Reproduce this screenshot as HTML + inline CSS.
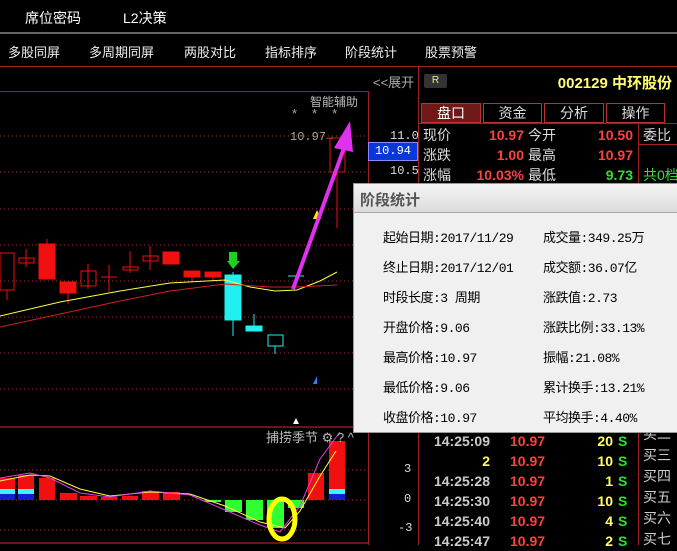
<!DOCTYPE html>
<html><head><meta charset="utf-8"><style>
*{margin:0;padding:0;box-sizing:border-box}
body{width:677px;height:545px;background:#000;overflow:hidden;position:relative;font-family:"Liberation Sans","Noto Sans CJK SC",sans-serif;color:#ddd}
.a{position:absolute;white-space:nowrap}
.m{font-family:"Liberation Mono","Noto Sans CJK SC",monospace}
.t{font-size:14px;color:#fff}
.r{color:#ff4040}.y{color:#ffff60}.g{color:#30e030}.w{color:#e0e0e0}
.pop{position:absolute;left:353px;top:183px;width:330px;height:250px;background:#f0f0f0;border:1px solid #999}
.pt{height:29px;background:linear-gradient(#f4f4f4,#dcdcdc);border-bottom:1px solid #aaa;font-size:15px;font-weight:bold;color:#555;padding:5px 0 0 6px}
.pl{position:absolute;font-size:13px;color:#000;font-family:"Liberation Mono","Noto Sans CJK SC",monospace;letter-spacing:-0.5px}
</style></head><body>
<div class="a t" style="left:25px;top:8px">席位密码</div>
<div class="a t" style="left:123px;top:8px">L2决策</div>
<div class="a" style="left:0;top:32px;width:677px;height:2px;background:#666"></div>
<div class="a" style="left:8px;top:42px;font-size:13px;color:#eee">多股同屏</div>
<div class="a" style="left:89px;top:42px;font-size:13px;color:#eee">多周期同屏</div>
<div class="a" style="left:184px;top:42px;font-size:13px;color:#eee">两股对比</div>
<div class="a" style="left:265px;top:42px;font-size:13px;color:#eee">指标排序</div>
<div class="a" style="left:345px;top:42px;font-size:13px;color:#eee">阶段统计</div>
<div class="a" style="left:425px;top:42px;font-size:13px;color:#eee">股票预警</div>
<div class="a" style="left:0;top:66px;width:677px;height:1px;background:#a02020"></div>
<div class="a" style="left:0;top:91px;width:368px;height:1px;background:#a02020"></div>
<div class="a" style="left:418px;top:67px;width:1px;height:478px;background:#a02020"></div>
<div class="a" style="left:368px;top:91px;width:1px;height:454px;background:#a02020"></div>
<div class="a" style="left:373px;top:72px;font-size:13px;color:#aaa">&lt;&lt;展开</div>
<div class="a" style="left:424px;top:74px;width:23px;height:14px;background:#333;border-radius:2px;color:#ee6;font-size:10px;text-align:center;line-height:14px">R</div>
<div class="a" style="right:5px;top:72px;font-size:15px;font-weight:bold;color:#ffff70">002129 中环股份</div>
<div class="a" style="left:310px;top:93px;font-size:12px;color:#bbb">智能辅助</div>
<div class="a" style="left:292px;top:106px;font-size:13px;color:#aaa;letter-spacing:15px">***</div>
<div class="a m" style="left:290px;top:130px;font-size:12px;color:#aaa">10.97→</div>
<svg class="a" style="left:0;top:91px" width="368" height="454">
<g stroke="#a03030" stroke-dasharray="1,3">
<line x1="0" y1="45" x2="368" y2="45"/><line x1="0" y1="81" x2="368" y2="81"/><line x1="0" y1="118" x2="368" y2="118"/><line x1="0" y1="154" x2="368" y2="154"/><line x1="0" y1="190" x2="368" y2="190"/><line x1="0" y1="226" x2="368" y2="226"/><line x1="0" y1="262" x2="368" y2="262"/><line x1="0" y1="298" x2="368" y2="298"/>
<line x1="0" y1="379" x2="368" y2="379"/><line x1="0" y1="409" x2="368" y2="409"/><line x1="0" y1="439" x2="368" y2="439"/></g>
<line x1="0" y1="336" x2="368" y2="336" stroke="#c03030"/>
<line x1="0" y1="452" x2="368" y2="452" stroke="#c03030"/>
<g stroke="#f01010" fill="none">
<rect x="0" y="162" width="14" height="37"/><line x1="7" y1="199" x2="7" y2="209"/>
<rect x="19" y="167" width="15" height="5"/><line x1="26" y1="158" x2="26" y2="176"/>
<rect x="81" y="180" width="15" height="15"/><line x1="88" y1="173" x2="88" y2="198"/>
<line x1="101" y1="186" x2="117" y2="186"/><line x1="109" y1="174" x2="109" y2="201"/>
<rect x="123" y="176" width="15" height="3"/><line x1="130" y1="160" x2="130" y2="182"/>
<rect x="143" y="165" width="15" height="5"/><line x1="150" y1="155" x2="150" y2="179"/>
<rect x="330" y="47" width="15" height="34"/><line x1="337" y1="81" x2="337" y2="137"/>
</g>
<g fill="#f01010" stroke="#f01010">
<rect x="39" y="153" width="16" height="35"/><line x1="47" y1="148" x2="47" y2="153"/>
<rect x="60" y="191" width="16" height="11"/><line x1="68" y1="202" x2="68" y2="213"/>
<rect x="163" y="161" width="16" height="12"/>
<rect x="184" y="180" width="16" height="6"/><line x1="192" y1="186" x2="192" y2="191"/>
<rect x="205" y="181" width="16" height="5"/><line x1="213" y1="186" x2="213" y2="190"/>
</g>
<g fill="#20f0f0" stroke="#20f0f0">
<rect x="225" y="184" width="16" height="45"/><line x1="233" y1="181" x2="233" y2="245"/>
<rect x="246" y="235" width="16" height="5"/><line x1="254" y1="223" x2="254" y2="240"/>
<rect x="268" y="244" width="15" height="11" fill="none"/><line x1="275" y1="255" x2="275" y2="263"/>
<line x1="288" y1="185" x2="304" y2="185"/>
</g>
<path d="M227 170 L240 170 L233 178Z" fill="#20d020"/><rect x="229" y="161" width="8" height="9" fill="#20d020"/>
<polyline fill="none" stroke="#ffff40" points="0,225 60,211 120,200 170,192 225,189 250,196 275,200 297,199 320,190 337,181"/>
<polyline fill="none" stroke="#d02020" points="0,236 60,223 120,210 170,200 225,193 270,196 297,196 337,194"/>
<path d="M313 128 L317 119 L321 128 Z" fill="#ffee00"/>
<line x1="293" y1="198" x2="344" y2="57" stroke="#e030f0" stroke-width="4"/>
<path d="M334 57 L350 30 L353 61 Z" fill="#e030f0"/>
<path d="M313 293 L317 285 L317 293Z" fill="#3080ff"/>
<path d="M293 333 L296 327 L299 333Z" fill="#fff"/>
<g fill="#f01010">
<rect x="0" y="387" width="15" height="22"/><rect x="18" y="384" width="16" height="25"/><rect x="39" y="387" width="16" height="22"/>
<rect x="60" y="402" width="17" height="7"/><rect x="80" y="405" width="17" height="4"/><rect x="101" y="406" width="16" height="3"/><rect x="122" y="405" width="16" height="4"/><rect x="142" y="400" width="17" height="9"/><rect x="163" y="401" width="17" height="8"/>
<rect x="308" y="382" width="16" height="27"/><rect x="329" y="350" width="16" height="59"/></g>
<g fill="#30ff30"><rect x="205" y="409" width="16" height="2"/><rect x="225" y="409" width="17" height="12"/><rect x="246" y="409" width="17" height="20"/><rect x="267" y="409" width="17" height="28"/><rect x="288" y="409" width="16" height="8"/></g>
<g fill="#40f0ff"><rect x="0" y="398" width="15" height="5"/><rect x="18" y="398" width="16" height="5"/><rect x="329" y="398" width="16" height="5"/></g>
<g fill="#1020d0"><rect x="0" y="403" width="15" height="6"/><rect x="18" y="403" width="16" height="6"/><rect x="329" y="403" width="16" height="6"/></g>
<polyline fill="none" stroke="#ffff40" points="0,390 30,384 50,385 80,398 110,405 150,401 190,403 225,415 260,431 285,437 300,420 320,385 336,360"/>
<polyline fill="none" stroke="#e040e0" points="0,387 30,382 50,387 80,402 110,406 150,400 190,404 225,419 260,434 280,441 300,415 320,368 340,341"/>
<ellipse cx="282" cy="428" rx="13" ry="20" fill="none" stroke="#ffff00" stroke-width="5"/>
</svg>
<div class="a" style="left:266px;top:427px;font-size:13px;color:#bbb">捕捞季节 ⚙ ? ^</div>
<div class="a m" style="left:390px;top:129px;font-size:12px;color:#ddd">11.0</div>
<div class="a m" style="left:368px;top:142px;width:50px;height:19px;background:#0838d8;border:1px solid #88f;color:#fff;font-size:12px;text-align:center;line-height:17px">10.94</div>
<div class="a m" style="left:390px;top:164px;font-size:12px;color:#ddd">10.5</div>
<div class="a m" style="left:404px;top:462px;font-size:12px;color:#ddd">3</div>
<div class="a m" style="left:404px;top:492px;font-size:12px;color:#ddd">0</div>
<div class="a m" style="left:398px;top:521px;font-size:12px;color:#ddd">-3</div>
<div class="a" style="left:421px;top:103px;width:60px;height:20px;background:#701818;border:1px solid #c03030;color:#fff;font-size:14px;text-align:center;line-height:18px">盘口</div>
<div class="a" style="left:483px;top:103px;width:59px;height:20px;border:1px solid #c03030;color:#ddd;font-size:14px;text-align:center;line-height:18px">资金</div>
<div class="a" style="left:544px;top:103px;width:60px;height:20px;border:1px solid #c03030;color:#ddd;font-size:14px;text-align:center;line-height:18px">分析</div>
<div class="a" style="left:606px;top:103px;width:59px;height:20px;border:1px solid #c03030;color:#ddd;font-size:14px;text-align:center;line-height:18px">操作</div>
<div class="a" style="left:419px;top:123px;width:258px;height:1px;background:#a02020"></div>
<div class="a" style="left:638px;top:123px;width:1px;height:422px;background:#a02020"></div>
<div class="a" style="left:638px;top:144px;width:39px;height:1px;background:#a02020"></div>
<div class="a" style="left:423px;top:125px;font-size:14px;line-height:20px;color:#ddd">现价<br>涨跌<br>涨幅</div>
<div class="a r" style="left:440px;top:125px;width:84px;text-align:right;font-size:14px;font-weight:bold;line-height:20px">10.97<br>1.00<br>10.03%</div>
<div class="a" style="left:528px;top:125px;font-size:14px;line-height:20px;color:#ddd">今开<br>最高<br>最低</div>
<div class="a" style="left:580px;top:125px;width:53px;text-align:right;font-size:14px;font-weight:bold;line-height:20px"><span class="r">10.50</span><br><span class="r">10.97</span><br><span class="g">9.73</span></div>
<div class="a" style="left:643px;top:125px;font-size:14px;color:#ddd">委比</div>
<div class="a g" style="left:643px;top:165px;font-size:14px">共0档</div>
<div class="a" style="left:420px;top:431px;width:218px;font-size:14px;font-weight:bold;line-height:20px">
<div style="position:relative;height:20px"><span class="a" style="right:148px;color:#ccc">14:25:09</span><span class="a r" style="left:90px">10.97</span><span class="a y" style="right:25px">20</span><span class="a g" style="left:198px">S</span></div>
<div style="position:relative;height:20px"><span class="a y" style="right:148px">2</span><span class="a r" style="left:90px">10.97</span><span class="a y" style="right:25px">10</span><span class="a g" style="left:198px">S</span></div>
<div style="position:relative;height:20px"><span class="a" style="right:148px;color:#ccc">14:25:28</span><span class="a r" style="left:90px">10.97</span><span class="a y" style="right:25px">1</span><span class="a g" style="left:198px">S</span></div>
<div style="position:relative;height:20px"><span class="a" style="right:148px;color:#ccc">14:25:30</span><span class="a r" style="left:90px">10.97</span><span class="a y" style="right:25px">10</span><span class="a g" style="left:198px">S</span></div>
<div style="position:relative;height:20px"><span class="a" style="right:148px;color:#ccc">14:25:40</span><span class="a r" style="left:90px">10.97</span><span class="a y" style="right:25px">4</span><span class="a g" style="left:198px">S</span></div>
<div style="position:relative;height:20px"><span class="a" style="right:148px;color:#ccc">14:25:47</span><span class="a r" style="left:90px">10.97</span><span class="a y" style="right:25px">2</span><span class="a g" style="left:198px">S</span></div>
</div>
<div class="a" style="left:643px;top:424px;font-size:14px;line-height:21px;color:#ccc">买二<br>买三<br>买四<br>买五<br>买六<br>买七</div>
<div class="pop"><div class="pt">阶段统计</div>
<div class="pl" style="left:29px;top:43px">起始日期:2017/11/29</div><div class="pl" style="left:189px;top:43px">成交量:349.25万</div>
<div class="pl" style="left:29px;top:73px">终止日期:2017/12/01</div><div class="pl" style="left:189px;top:73px">成交额:36.07亿</div>
<div class="pl" style="left:29px;top:103px">时段长度:3 周期</div><div class="pl" style="left:189px;top:103px">涨跌值:2.73</div>
<div class="pl" style="left:29px;top:133px">开盘价格:9.06</div><div class="pl" style="left:189px;top:133px">涨跌比例:33.13%</div>
<div class="pl" style="left:29px;top:163px">最高价格:10.97</div><div class="pl" style="left:189px;top:163px">振幅:21.08%</div>
<div class="pl" style="left:29px;top:193px">最低价格:9.06</div><div class="pl" style="left:189px;top:193px">累计换手:13.21%</div>
<div class="pl" style="left:29px;top:223px">收盘价格:10.97</div><div class="pl" style="left:189px;top:223px">平均换手:4.40%</div>
</div>
</body></html>
